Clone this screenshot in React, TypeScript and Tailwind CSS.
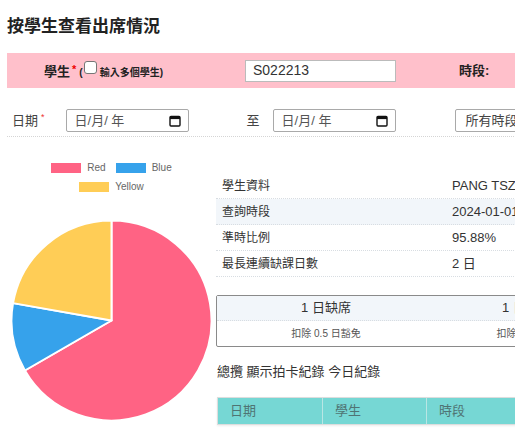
const font = "font-['Liberation_Sans','Noto_Sans_CJK_TC',sans-serif]";

function CalendarIcon() {
  return (
    <svg width="12" height="12" viewBox="0 0 12 12" className="shrink-0">
      <rect x="1" y="1.5" width="10" height="9.5" rx="1" fill="none" stroke="#111" strokeWidth="1.4" />
      <rect x="1" y="1.5" width="10" height="2.6" fill="#111" />
    </svg>
  );
}

function DateBox() {
  return (
    <div className="flex h-[23px] w-[123px] items-center justify-between rounded-[2px] border border-[#a9a9a9] bg-white pl-[8px] pr-[7px]">
      <span className="text-[13px] text-[#555]">日/月/ 年</span>
      <CalendarIcon />
    </div>
  );
}

function Pie() {
  const cx = 104.5;
  const cy = 100.5;
  const r = 100;
  const pt = (deg: number) => {
    const a = (deg * Math.PI) / 180;
    return `${(cx + r * Math.sin(a)).toFixed(2)} ${(cy - r * Math.cos(a)).toFixed(2)}`;
  };
  const slices = [
    { from: 0, to: 240, color: "#ff6384" },
    { from: 240, to: 280, color: "#36a2eb" },
    { from: 280, to: 360, color: "#ffcd56" },
  ];
  return (
    <svg width="209" height="202" viewBox="0 0 209 202">
      {slices.map((s) => (
        <path
          key={s.color}
          d={`M ${cx} ${cy} L ${pt(s.from)} A ${r} ${r} 0 ${s.to - s.from > 180 ? 1 : 0} 1 ${pt(s.to)} Z`}
          fill={s.color}
          stroke="#fff"
          strokeWidth="2"
          strokeLinejoin="round"
        />
      ))}
    </svg>
  );
}

function LegendItem({ color, label }: { color: string; label: string }) {
  return (
    <div className="flex items-center gap-[6px]">
      <span className="h-[10px] w-[30px]" style={{ background: color }} />
      <span className="text-[10px] text-[#666]">{label}</span>
    </div>
  );
}

const info = [
  { k: "學生資料", v: "PANG TSZ HIN", shade: false },
  { k: "查詢時段", v: "2024-01-01 至 2024-06-30", shade: true },
  { k: "準時比例", v: "95.88%", shade: false },
  { k: "最長連續缺課日數", v: "2 日", shade: false },
];

export default function App() {
  return (
    <div className={`h-[432px] w-[515px] overflow-hidden bg-white ${font} text-[#333]`}>
      <div className="w-[800px] pl-[7px] pt-[17px]">
        <h2 className="text-[17px] font-bold leading-[20px] text-[#222]">按學生查看出席情況</h2>

        {/* student filter bar */}
        <div className="mt-[16px] flex h-[35px] items-center bg-[#ffc0cb]">
          <div className="flex w-[238px] items-center pl-[37px]">
            <span className="mt-[3px] text-[13px] font-bold text-[#222]">學生</span>
            <span className="ml-[2px] mt-[-2px] text-[11px] font-bold text-[#e00]">*</span>
            <span className="ml-[3px] mt-[3px] text-[10px] font-bold text-[#222]">(</span>
            <span className="mb-[6px] ml-[1px] h-[13px] w-[13px] rounded-[3px] border border-[#767676] bg-white" />
            <span className="ml-[3px] mt-[3px] text-[10px] font-bold text-[#222]">輸入多個學生)</span>
          </div>
          <div className="flex h-[22px] w-[151px] items-center border border-[#bbb] bg-white pl-[7px] text-[14px] text-[#333]">
            S022213
          </div>
          <span className="ml-[63px] text-[13px] font-bold text-[#222]">時段:</span>
        </div>

        {/* date row */}
        <div className="flex items-center border-b border-dotted border-[#d5d5d5] pb-[4px] pl-[5px] pt-[21px]">
          <span className="text-[13px] text-[#444]">日期</span>
          <span className="ml-[3px] mt-[-6px] text-[9px] text-[#e33]">*</span>
          <div className="ml-[21px]">
            <DateBox />
          </div>
          <span className="ml-[58px] text-[13px] text-[#444]">至</span>
          <div className="ml-[13px]">
            <DateBox />
          </div>
          <div className="ml-[59px] flex h-[23px] w-[120px] items-center rounded-[2px] border border-[#a9a9a9] bg-white pl-[10px] text-[13px] text-[#444]">
            所有時段
          </div>
        </div>

        <div className="flex">
          {/* chart */}
          <div className="w-[209px] shrink-0">
            <div className="pt-[21px]">
              <div className="flex h-[19px] items-center justify-center gap-[10px]">
                <LegendItem color="#ff6384" label="Red" />
                <LegendItem color="#36a2eb" label="Blue" />
              </div>
              <div className="flex h-[19px] items-center justify-center">
                <LegendItem color="#ffcd56" label="Yellow" />
              </div>
            </div>
            <div className="mt-[24px]">
              <Pie />
            </div>
          </div>

          {/* details */}
          <div className="pt-[36px]">
            <div className="w-[420px]">
              {info.map((row) => (
                <div
                  key={row.k}
                  className={`flex h-[26px] items-center border-b border-dotted border-[#d8dde2] text-[#333] ${row.shade ? "bg-[#f2f6fa]" : ""}`}
                >
                  <span className="w-[236px] pl-[6px] text-[12px]">{row.k}</span>
                  <span className="whitespace-nowrap text-[13px]">{row.v}</span>
                </div>
              ))}
            </div>

            <div className="mt-[18px] w-[404px] rounded-[2px] border border-[#8a8a8a]">
              <div className="flex h-[25px] items-center border-b border-dotted border-[#d8dde2] bg-[#f2f6fa] text-[13px] text-[#333]">
                <span className="w-[218px] text-center">1 日缺席</span>
                <span className="w-[184px] text-center">1 日遲到</span>
              </div>
              <div className="flex h-[25px] items-center text-[10px] text-[#555]">
                <span className="w-[218px] text-center">扣除 0.5 日豁免</span>
                <span className="w-[184px] text-center">扣除 0 日豁免</span>
              </div>
            </div>

            <div className="mt-[16px] pl-[1px] text-[13px] leading-[18px] text-[#333]">
              總攬 顯示拍卡紀錄 今日紀錄
            </div>

            <div className="ml-[1px] mt-[16px] flex h-[28px] w-[420px] border border-[#ddd] bg-[#76d7d4] text-[13px] text-[#4f7473] shadow-[0_1px_2px_rgba(0,0,0,0.08)]">
              {["日期", "學生", "時段", "狀態"].map((h, i) => (
                <div
                  key={h}
                  className={`flex w-[104px] items-center pl-[12px] ${i > 0 ? "border-l border-[#b9e6e4]" : ""}`}
                >
                  {h}
                </div>
              ))}
            </div>
          </div>
        </div>
      </div>
    </div>
  );
}
